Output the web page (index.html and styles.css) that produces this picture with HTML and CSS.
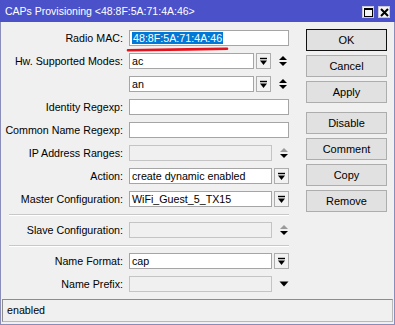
FILE: index.html
```html
<!DOCTYPE html>
<html lang="en">
<head>
    <meta charset="UTF-8">
    <title>CAPs Provisioning</title>
    <link rel="stylesheet" href="styles.css">
</head>
<body>
<div class="window">
    <div class="titlebar">
        <span class="title">CAPs Provisioning &lt;48:8F:5A:71:4A:46&gt;</span>
        <div class="tb-buttons">
            <span class="tb-btn"><span class="max-icon"></span></span>
            <span class="tb-btn">
                <svg width="9" height="9" viewBox="0 0 9 9"><path d="M1 1L8 8M8 1L1 8" stroke="#000" stroke-width="2"/></svg>
            </span>
        </div>
    </div>

    <div class="content">
        <div class="form">
            <div class="row">
                <label>Radio MAC:</label>
                <div class="field">
                    <div class="input wide"><span class="selected">48:8F:5A:71:4A:46</span></div>
                </div>
                <!-- red pen mark under the MAC -->
                <svg class="pen-mark" width="110" height="8" viewBox="0 0 110 8">
                    <path d="M3 5.2 C 30 4.8, 70 4.4, 102 3.8" stroke="#e3121c" stroke-width="2.6" fill="none" stroke-linecap="round"/>
                </svg>
            </div>
            <div class="row">
                <label>Hw. Supported Modes:</label>
                <div class="field">
                    <div class="input short">ac</div>
                    <span class="drop-btn"><svg width="9" height="9" viewBox="0 0 9 9"><path d="M1 1.5H8" stroke="#000" stroke-width="1.4"/><path d="M1 3.5H8L4.5 8Z" fill="#000"/></svg></span>
                    <span class="updown"><svg width="10" height="12" viewBox="0 0 10 12"><path d="M1 5H9L5 1Z" fill="#000"/><path d="M1 7H9L5 11Z" fill="#000"/></svg></span>
                </div>
            </div>
            <div class="row">
                <label></label>
                <div class="field">
                    <div class="input short">an</div>
                    <span class="drop-btn"><svg width="9" height="9" viewBox="0 0 9 9"><path d="M1 1.5H8" stroke="#000" stroke-width="1.4"/><path d="M1 3.5H8L4.5 8Z" fill="#000"/></svg></span>
                    <span class="updown"><svg width="10" height="12" viewBox="0 0 10 12"><path d="M1 5H9L5 1Z" fill="#000"/><path d="M1 7H9L5 11Z" fill="#000"/></svg></span>
                </div>
            </div>
            <div class="row">
                <label>Identity Regexp:</label>
                <div class="field"><div class="input wide"></div></div>
            </div>
            <div class="row">
                <label>Common Name Regexp:</label>
                <div class="field"><div class="input wide"></div></div>
            </div>
            <div class="row">
                <label>IP Address Ranges:</label>
                <div class="field">
                    <div class="input mid disabled"></div>
                    <span class="updown"><svg width="10" height="12" viewBox="0 0 10 12"><path d="M1 5H9L5 1Z" fill="#9a9a9a"/><path d="M1 7H9L5 11Z" fill="#000"/></svg></span>
                </div>
            </div>
            <div class="row">
                <label>Action:</label>
                <div class="field">
                    <div class="input mid">create dynamic enabled</div>
                    <span class="drop-btn"><svg width="9" height="9" viewBox="0 0 9 9"><path d="M1 1.5H8" stroke="#000" stroke-width="1.4"/><path d="M1 3.5H8L4.5 8Z" fill="#000"/></svg></span>
                </div>
            </div>
            <div class="row">
                <label>Master Configuration:</label>
                <div class="field">
                    <div class="input mid">WiFi_Guest_5_TX15</div>
                    <span class="drop-btn"><svg width="9" height="9" viewBox="0 0 9 9"><path d="M1 1.5H8" stroke="#000" stroke-width="1.4"/><path d="M1 3.5H8L4.5 8Z" fill="#000"/></svg></span>
                </div>
            </div>
            <div class="separator"></div>
            <div class="row">
                <label>Slave Configuration:</label>
                <div class="field">
                    <div class="input mid disabled"></div>
                    <span class="updown"><svg width="10" height="12" viewBox="0 0 10 12"><path d="M1 5H9L5 1Z" fill="#9a9a9a"/><path d="M1 7H9L5 11Z" fill="#000"/></svg></span>
                </div>
            </div>
            <div class="separator"></div>
            <div class="row">
                <label>Name Format:</label>
                <div class="field">
                    <div class="input mid">cap</div>
                    <span class="drop-btn"><svg width="9" height="9" viewBox="0 0 9 9"><path d="M1 1.5H8" stroke="#000" stroke-width="1.4"/><path d="M1 3.5H8L4.5 8Z" fill="#000"/></svg></span>
                </div>
            </div>
            <div class="row">
                <label>Name Prefix:</label>
                <div class="field">
                    <div class="input mid disabled"></div>
                    <span class="down-only"><svg width="10" height="6" viewBox="0 0 10 6"><path d="M0.5 0.5H9.5L5 5.5Z" fill="#000"/></svg></span>
                </div>
            </div>
        </div>

        <div class="actions">
            <button class="btn default">OK</button>
            <button class="btn">Cancel</button>
            <button class="btn">Apply</button>
            <button class="btn spaced">Disable</button>
            <button class="btn">Comment</button>
            <button class="btn">Copy</button>
            <button class="btn">Remove</button>
        </div>
    </div>

    <div class="status">enabled</div>
</div>
</body>
</html>
```

FILE: styles.css
```css
:root {
    --title-blue: #4b51c9;
    --panel: #f0f0f0;
    --field-border: #a5a5a5;
    --btn-bg: #e1e1e1;
    --btn-border: #adadad;
    --font-main: "Liberation Sans", Arial, sans-serif;
}
* {
    box-sizing: border-box;
}
body {
    margin: 0;
    font-family: var(--font-main);
    font-size: 10.7px;
    color: #000;
}
.window {
    width: 395px;
    height: 325px;
    background: var(--panel);
    border: 1px solid #8a8db8;
    border-top: none;
    display: flex;
    flex-direction: column;
}

/* title bar */
.titlebar {
    height: 22px;
    margin: 0 -1px;
    background: var(--title-blue);
    color: #fff;
    display: flex;
    align-items: center;
    justify-content: space-between;
    padding: 0 5px 0 5px;
}
.title {
    font-size: 10.5px;
}
.tb-buttons {
    display: flex;
    gap: 4px;
    margin-top: 2px;
}
.tb-btn {
    width: 12px;
    height: 12px;
    background: #f3f3f3;
    border: 1px solid #c8c8d8;
    display: flex;
    align-items: center;
    justify-content: center;
}
.max-icon {
    width: 9px;
    height: 9px;
    border: 1px solid #000;
    border-top-width: 2px;
}

/* main area */
.content {
    flex: 1;
    display: flex;
    padding: 7px 7px 0 0;
    gap: 17px;
}
.form {
    width: 288px;
    display: flex;
    flex-direction: column;
    gap: 7px;
    padding-top: 1px;
}
.row {
    position: relative;
    display: flex;
    align-items: center;
    height: 16px;
}
.row label {
    width: 123px;
    text-align: right;
    padding-right: 1px;
    white-space: nowrap;
}
.field {
    margin-left: 5px;
    width: 160px;
    display: flex;
    align-items: center;
}
.input {
    height: 16px;
    background: #fff;
    border: 1px solid var(--field-border);
    padding: 0 2px;
    line-height: 14px;
    white-space: nowrap;
    overflow: hidden;
}
.input.wide { width: 160px; }
.input.short { width: 125px; }
.input.mid { width: 143px; }
.input.disabled {
    background: var(--panel);
    border-color: #c4c4c4;
}
.selected {
    background: #0078d7;
    color: #fff;
    display: inline-block;
    line-height: 12px;
    padding: 0 1px;
}
.pen-mark {
    position: absolute;
    left: 124px;
    top: 15px;
}
.drop-btn {
    width: 15px;
    height: 16px;
    margin-left: 2px;
    border: 1px solid var(--btn-border);
    background: #f2f2f2;
    display: flex;
    align-items: center;
    justify-content: center;
}
.updown,
.down-only {
    margin-left: 7px;
    display: flex;
    align-items: center;
}
.separator {
    height: 1px;
    margin-left: 8px;
    background: #c8c8c8;
    box-shadow: 0 1px 0 #fff;
}

/* buttons column */
.actions {
    width: 82px;
    display: flex;
    flex-direction: column;
    gap: 4px;
}
.btn {
    height: 22px;
    font-family: var(--font-main);
    font-size: 11px;
    background: var(--btn-bg);
    border: 1px solid var(--btn-border);
    padding: 0;
    color: #000;
}
.btn.default {
    border-color: #111;
}
.btn.spaced {
    margin-top: 5px;
}

/* status bar */
.status {
    height: 23px;
    margin: 0 1px 2px 1px;
    border: 1px solid #b8b8b8;
    border-top-color: #8c8c8c;
    border-left-color: #8c8c8c;
    padding: 0 4px;
    line-height: 21px;
}
```
